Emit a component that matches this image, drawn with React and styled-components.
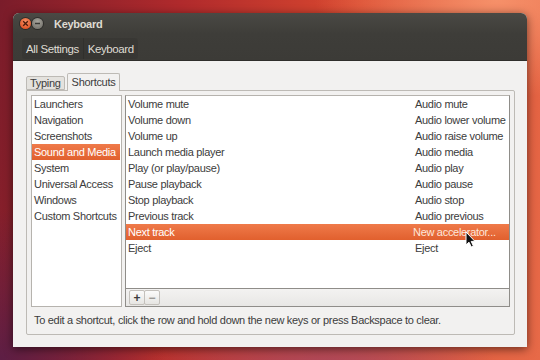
import styled, { createGlobalStyle } from "styled-components";

const GlobalStyle = createGlobalStyle`
    html, body {
        margin: 0;
        padding: 0;
        width: 540px;
        height: 360px;
        overflow: hidden;
    }
    body {
        font-family: "Liberation Sans", "DejaVu Sans", sans-serif;
        letter-spacing: -0.3px;
    }
`;

const categories = [
    "Launchers",
    "Navigation",
    "Screenshots",
    "Sound and Media",
    "System",
    "Universal Access",
    "Windows",
    "Custom Shortcuts",
];

const shortcuts = [
    ["Volume mute", "Audio mute"],
    ["Volume down", "Audio lower volume"],
    ["Volume up", "Audio raise volume"],
    ["Launch media player", "Audio media"],
    ["Play (or play/pause)", "Audio play"],
    ["Pause playback", "Audio pause"],
    ["Stop playback", "Audio stop"],
    ["Previous track", "Audio previous"],
    ["Next track", "New accelerator..."],
    ["Eject", "Eject"],
];

const App = () => {
    return (
        <Desktop>
            <GlobalStyle />
            <Window>
                <TitleBar>
                    <TitleRow>
                        <WindowButton variant="close">
                            <svg width="7" height="7" viewBox="0 0 7 7">
                                <path d="M1.2 1.2 L5.8 5.8 M5.8 1.2 L1.2 5.8" stroke="#4a1a0a" strokeWidth="1.3" />
                            </svg>
                        </WindowButton>
                        <WindowButton>
                            <svg width="7" height="7" viewBox="0 0 7 7">
                                <path d="M1 3.5 L6 3.5" stroke="#3a3935" strokeWidth="1.4" />
                            </svg>
                        </WindowButton>
                        <Title>Keyboard</Title>
                    </TitleRow>
                    <Crumbs>
                        <Crumb>All Settings</Crumb>
                        <Crumb>Keyboard</Crumb>
                    </Crumbs>
                </TitleBar>

                <Body>
                    <Tabs>
                        <Tab>Typing</Tab>
                        <Tab active>Shortcuts</Tab>
                    </Tabs>
                    <Frame>
                        <Panes>
                            <CategoryList>
                                {categories.map((c) => (
                                    <CategoryRow key={c} selected={c === "Sound and Media"}>
                                        {c}
                                    </CategoryRow>
                                ))}
                            </CategoryList>
                            <ShortcutList>
                                <Rows>
                                    {shortcuts.map(([name, accel]) => {
                                        const editing = name === "Next track";
                                        return (
                                            <ShortcutRow key={name} selected={editing}>
                                                <span>{name}</span>
                                                <Accel editing={editing}>{accel}</Accel>
                                            </ShortcutRow>
                                        );
                                    })}
                                </Rows>
                                <ListToolbar>
                                    <SmallButton>+</SmallButton>
                                    <SmallButton dim>−</SmallButton>
                                </ListToolbar>
                            </ShortcutList>
                        </Panes>
                        <Hint>
                            To edit a shortcut, click the row and hold down the new keys or press Backspace to clear.
                        </Hint>
                    </Frame>
                </Body>
            </Window>

            <Cursor width="11" height="17" viewBox="0 0 11 17">
                <path
                    d="M1 1 L1 14 L4 11.2 L6.3 16 L8.4 15 L6.2 10.4 L10 10.4 Z"
                    fill="#111"
                    stroke="#fff"
                    strokeWidth="1"
                    strokeLinejoin="round"
                />
            </Cursor>
        </Desktop>
    );
};

export default App;

const Desktop = styled.div`
    position: relative;
    width: 540px;
    height: 360px;
    box-sizing: border-box;
    padding: 13px;
    background:
        radial-gradient(ellipse 260px 140px at 92% 0%, rgba(248, 150, 110, 0.9), transparent 70%),
        radial-gradient(ellipse 220px 200px at 0% 100%, rgba(90, 30, 70, 0.95), transparent 75%),
        radial-gradient(ellipse 260px 160px at 60% 110%, rgba(150, 70, 110, 0.9), transparent 70%),
        linear-gradient(100deg, #7a1c2a 0%, #b02a2c 30%, #d9482f 60%, #e76a48 100%);
`;

const Window = styled.div`
    width: 514px;
    height: 334px;
    display: flex;
    flex-direction: column;
    border-radius: 6px 6px 0 0;
    overflow: hidden;
    background: #f2f1f0;
    box-shadow: 0 2px 10px rgba(0, 0, 0, 0.55);
`;

const TitleBar = styled.div`
    height: 48px;
    display: flex;
    flex-direction: column;
    background: linear-gradient(#4a4944, #3e3d39 45%, #3c3b37);
    border-bottom: 1px solid #2f2e2b;
    box-sizing: border-box;
`;

const TitleRow = styled.div`
    height: 19px;
    display: flex;
    align-items: center;
    gap: 1px;
    padding: 1px 0 0 7px;
`;

const WindowButton = styled.div`
    width: 11px;
    height: 11px;
    border-radius: 50%;
    display: flex;
    align-items: center;
    justify-content: center;
    background: ${(p) =>
        p.variant === "close"
            ? "radial-gradient(circle at 50% 35%, #f6956a, #e2582a 70%, #b8401c)"
            : "radial-gradient(circle at 50% 35%, #a9a79f, #7c7a73 70%, #5e5c56)"};
    box-shadow: 0 0 0 1px rgba(0, 0, 0, 0.35);
`;

const Title = styled.div`
    margin-left: 10px;
    color: #dfdbd2;
    font-size: 11px;
    font-weight: 700;
    letter-spacing: -0.3px;
`;

const Crumbs = styled.div`
    margin: 5px 0 0 9px;
    height: 21px;
    display: flex;
    align-self: flex-start;
    border-radius: 3px;
    background: rgba(0, 0, 0, 0.07);
`;

const Crumb = styled.div`
    display: flex;
    align-items: center;
    padding: 0 4px;
    color: #dfdbd2;
    font-size: 11.5px;
    letter-spacing: -0.4px;

    & + & {
        border-left: 1px solid rgba(0, 0, 0, 0.12);
    }
`;

const Body = styled.div`
    flex: 1;
    display: flex;
    flex-direction: column;
    padding: 12px 12px 12px 13px;
    min-height: 0;
`;

const Tabs = styled.div`
    height: 17px;
    display: flex;
    align-items: flex-end;
    gap: 2px;
    position: relative;
    z-index: 1;
`;

const Tab = styled.div`
    height: ${(p) => (p.active ? "18px" : "14px")};
    margin-bottom: ${(p) => (p.active ? "-1px" : "0")};
    box-sizing: border-box;
    display: flex;
    align-items: center;
    padding: ${(p) => (p.active ? "0 4px 1px" : "0 3px")};
    font-size: 11px;
    color: #3c3c3c;
    border: 1px solid #bdbab5;
    border-bottom: ${(p) => (p.active ? "none" : "1px solid #bdbab5")};
    border-radius: 2px 2px 0 0;
    background: ${(p) => (p.active ? "#f2f1f0" : "#e4e2de")};
`;

const Frame = styled.div`
    flex: 1;
    display: flex;
    flex-direction: column;
    border: 1px solid #bdbab5;
    border-radius: 0 2px 2px 2px;
    padding: 4px 4px 0 4px;
    min-height: 0;
`;

const Panes = styled.div`
    height: 212px;
    display: flex;
    gap: 3px;
`;

const CategoryList = styled.div`
    width: 91px;
    box-sizing: border-box;
    border: 1px solid #b6b3ae;
    background: #fff;
`;

const CategoryRow = styled.div`
    height: 16px;
    line-height: 16px;
    padding-left: 2px;
    margin-right: 1px;
    font-size: 11px;
    white-space: nowrap;
    color: ${(p) => (p.selected ? "#fff" : "#3c3c3c")};
    background: ${(p) => (p.selected ? "linear-gradient(#ef7a4a, #e1602e)" : "transparent")};
`;

const ShortcutList = styled.div`
    flex: 1;
    display: flex;
    flex-direction: column;
    box-sizing: border-box;
    border: 1px solid #8f8d89;
    border-top-color: #b6b3ae;
    background: #fff;
`;

const Rows = styled.div`
    flex: 1;
`;

const ShortcutRow = styled.div`
    height: 16px;
    line-height: 16px;
    display: grid;
    grid-template-columns: 287px 1fr;
    padding-left: 2px;
    font-size: 11px;
    white-space: nowrap;
    color: ${(p) => (p.selected ? "#fff" : "#3c3c3c")};
    background: ${(p) => (p.selected ? "linear-gradient(#ef7a4a, #e1602e)" : "transparent")};
`;

const Accel = styled.span`
    margin-left: ${(p) => (p.editing ? "-2px" : "0")};
    color: ${(p) => (p.editing ? "#fde6da" : "inherit")};
`;

const ListToolbar = styled.div`
    height: 18px;
    box-sizing: border-box;
    display: flex;
    align-items: center;
    padding-left: 3px;
    border-top: 1px solid #8f8d89;
    background: linear-gradient(#f3f2f1, #e8e7e5);
`;

const SmallButton = styled.div`
    width: 14px;
    height: 13px;
    display: flex;
    align-items: center;
    justify-content: center;
    font-size: 12px;
    font-weight: 700;
    line-height: 1;
    letter-spacing: 0;
    color: ${(p) => (p.dim ? "#9a9894" : "#3c3c3c")};
    border: 1px solid #c4c1bc;
    background: linear-gradient(#fbfbfa, #e6e5e2);
    border-radius: 2px;

    & + & {
        margin-left: -1px;
    }
`;

const Hint = styled.div`
    flex: 1;
    display: flex;
    align-items: center;
    font-size: 11px;
    color: #3c3c3c;
    white-space: nowrap;
    padding: 0 0 1px 3px;
`;

const Cursor = styled.svg`
    position: absolute;
    left: 465px;
    top: 231px;
`;
